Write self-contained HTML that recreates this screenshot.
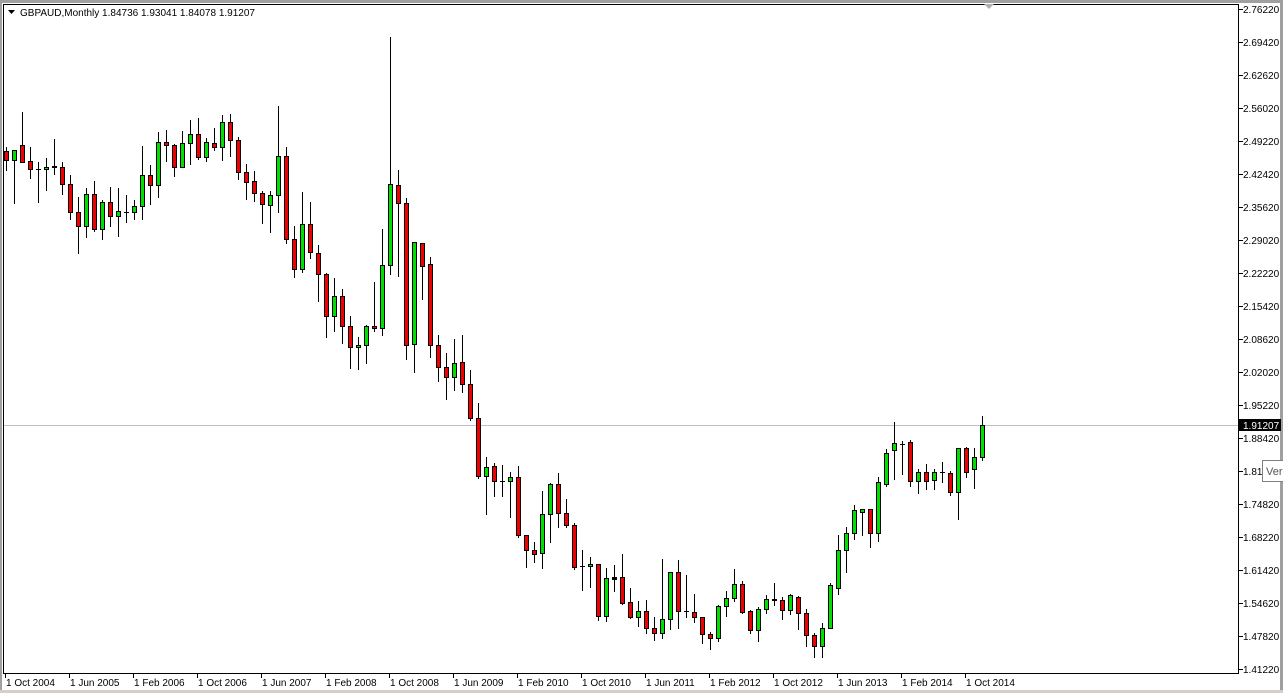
<!DOCTYPE html><html><head><style>
body{margin:0;background:#fff;width:1283px;height:693px;overflow:hidden;position:relative;font-family:Tahoma,"DejaVu Sans","Liberation Sans",sans-serif}
svg{position:absolute;left:0;top:0}
</style></head><body>
<svg id="s" width="1283" height="693" xmlns="http://www.w3.org/2000/svg" font-family="Liberation Sans, sans-serif" font-size="10"></svg>
<script>
var d=[
[151,160,147,170,'r'],[150,160,150,203,'g'],[145,162,112,162,'r'],[161,169,147,178,'r'],[169,169,162,202,'k'],[167,169,158,190,'g'],[166,167,139,174,'k'],[167,184,162,194,'r'],[184,212,175,219,'r'],[212,226,197,253,'r'],
[194,226,188,237,'g'],[194,229,181,231,'r'],[202,229,200,239,'g'],[202,216,187,226,'r'],[211,216,188,236,'g'],[212,212,195,222,'k'],[206,212,200,219,'g'],[175,206,146,219,'g'],[175,185,165,204,'r'],[142,185,132,197,'g'],
[142,145,130,161,'r'],[145,167,144,176,'r'],[143,167,131,167,'g'],[134,143,120,164,'g'],[134,157,118,159,'r'],[142,157,138,161,'g'],[143,147,128,150,'r'],[122,147,115,160,'g'],[122,140,114,156,'r'],[140,172,137,179,'r'],
[172,182,164,199,'r'],[181,193,171,201,'r'],[193,204,191,223,'r'],[195,205,191,232,'g'],[156,195,106,212,'g'],[156,239,147,243,'r'],[239,269,226,277,'r'],[224,269,192,272,'g'],[224,252,202,258,'r'],[253,274,245,301,'r'],
[274,316,273,337,'r'],[296,316,278,331,'g'],[296,326,289,343,'r'],[326,347,316,368,'r'],[345,347,337,369,'g'],[326,345,325,363,'g'],[326,328,282,331,'r'],[265,328,229,335,'g'],[184,265,37,274,'g'],[185,203,170,276,'r'],
[203,345,198,359,'r'],[242,344,242,372,'g'],[243,266,243,299,'r'],[264,345,257,357,'r'],[345,367,335,381,'r'],[367,377,353,399,'r'],[363,377,339,390,'g'],[362,384,335,392,'r'],[384,418,370,420,'r'],[418,476,403,478,'r'],
[467,476,457,514,'g'],[466,481,463,496,'r'],[481,481,465,496,'k'],[477,481,472,517,'g'],[477,535,466,537,'r'],[535,550,535,567,'r'],[550,554,542,562,'r'],[514,553,491,568,'g'],[484,514,483,542,'g'],[484,513,473,527,'r'],
[513,525,499,527,'r'],[525,567,523,569,'r'],[566,566,550,590,'k'],[564,566,557,587,'g'],[564,616,564,620,'r'],[578,616,568,621,'g'],[577,579,565,591,'k'],[577,603,554,604,'r'],[602,617,588,618,'r'],[611,617,601,626,'g'],
[611,628,600,633,'r'],[628,633,617,640,'r'],[619,633,559,638,'g'],[572,619,572,629,'g'],[572,611,560,628,'r'],[611,611,575,617,'k'],[612,617,594,622,'r'],[617,634,617,643,'r'],[634,638,632,649,'r'],[606,638,605,641,'g'],
[598,606,591,616,'g'],[584,598,569,601,'g'],[584,612,581,613,'r'],[611,630,610,633,'r'],[609,630,607,641,'g'],[599,609,595,613,'g'],[599,600,583,605,'r'],[600,610,597,619,'r'],[595,610,594,614,'g'],[597,613,596,629,'r'],
[613,635,609,646,'r'],[635,646,633,657,'r'],[628,646,623,657,'g'],[585,628,583,628,'g'],[550,588,535,594,'g'],[533,550,527,572,'g'],[510,533,505,539,'g'],[509,512,509,535,'g'],[509,533,509,547,'r'],[482,533,477,541,'g'],
[453,484,449,486,'g'],[443,450,422,479,'g'],[444,444,441,474,'k'],[442,481,440,486,'r'],[472,481,469,493,'g'],[472,481,464,489,'r'],[472,480,469,489,'g'],[472,472,462,482,'k'],[473,492,471,495,'r'],[448,492,448,519,'g'],
[448,472,447,477,'r'],[457,469,448,488,'g'],[425,457,416,460,'g']];
var h='';
h+='<rect x="0" y="0" width="1283" height="3" fill="#a0a0a0"/><rect x="0" y="0" width="2" height="693" fill="#a0a0a0"/><rect x="1280" y="0" width="3" height="693" fill="#a0a0a0"/><rect x="0" y="690" width="1283" height="3" fill="#d4d0c8"/>';
h+='<line x1="3.5" y1="4" x2="3.5" y2="674" stroke="#000"/><line x1="3" y1="4.5" x2="1238" y2="4.5" stroke="#000"/>';
h+='<line x1="1238.5" y1="4" x2="1238.5" y2="674" stroke="#000"/><line x1="3" y1="673.5" x2="1239" y2="673.5" stroke="#000"/>';
h+='<polygon points="984,4 994,4 989,9" fill="#b0b0b0"/>';
h+='<line x1="4" y1="425.5" x2="1238" y2="425.5" stroke="#c0c0c0"/>';
for(var i=0;i<d.length;i++){var c=d[i],x=6+8*i;
h+='<line x1="'+(x+.5)+'" y1="'+c[2]+'" x2="'+(x+.5)+'" y2="'+(c[3]+1)+'" stroke="#000"/>';
if(c[4]=='k'||c[1]-c[0]<2){h+='<rect x="'+(x-2)+'" y="'+c[0]+'" width="5" height="'+Math.max(1,c[1]-c[0]+1)+'" fill="#000"/>';if(c[4]!='k'&&c[1]-c[0]>=1)h+='';}
else{h+='<rect x="'+(x-2)+'" y="'+c[0]+'" width="5" height="'+(c[1]-c[0]+1)+'" fill="#000"/><rect x="'+(x-1)+'" y="'+(c[0]+1)+'" width="3" height="'+(c[1]-c[0]-1)+'" fill="'+(c[4]=='g'?'#00e000':'#f00000')+'"/>';}
}
var L=['2.76220','2.69420','2.62620','2.56020','2.49220','2.42420','2.35620','2.29020','2.22220','2.15420','2.08620','2.02020','1.95220','1.88420','1.81','1.74820','1.68220','1.61420','1.54620','1.47820','1.41220'];
var Y=[9,42,75,108,141,174,207,240,273,306,339,372,405,438,471,504,537,570,603,636,669];
for(i=0;i<L.length;i++){h+='<line x1="1239" y1="'+(Y[i]+.5)+'" x2="1243" y2="'+(Y[i]+.5)+'" stroke="#000"/><text x="1243" y="'+(Y[i]+4)+'" fill="#000">'+L[i]+'</text>';}
h+='<rect x="1239" y="419" width="42" height="12" fill="#000"/><text x="1243" y="429" fill="#fff">1.91207</text>';
h+='<rect x="1262.5" y="460.5" width="22" height="21" fill="#fff" stroke="#808080"/><text x="1266" y="475" fill="#555" font-size="11">Ver</text>';
var D=['1 Oct 2004','1 Jun 2005','1 Feb 2006','1 Oct 2006','1 Jun 2007','1 Feb 2008','1 Oct 2008','1 Jun 2009','1 Feb 2010','1 Oct 2010','1 Jun 2011','1 Feb 2012','1 Oct 2012','1 Jun 2013','1 Feb 2014','1 Oct 2014'];
for(i=0;i<D.length;i++){var x=5+64*i;h+='<line x1="'+(x+.5)+'" y1="674" x2="'+(x+.5)+'" y2="678" stroke="#000"/><text x="'+(x+1)+'" y="686" fill="#000">'+D[i]+'</text>';}
h+='<polygon points="8,10 15,10 11.5,14" fill="#000"/><text x="20" y="16" fill="#000">GBPAUD,Monthly  1.84736 1.93041 1.84078 1.91207</text>';
document.getElementById('s').innerHTML=h;
</script>
</body></html>
